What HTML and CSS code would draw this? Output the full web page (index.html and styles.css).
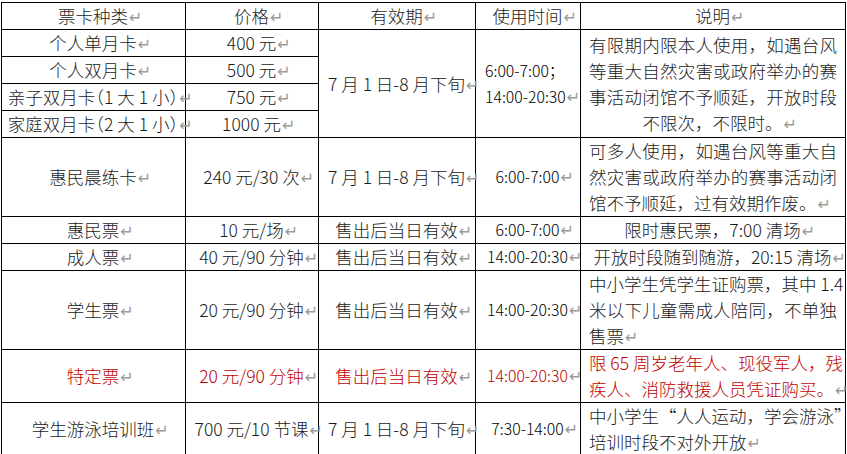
FILE: index.html
```html
<!DOCTYPE html>
<html lang="zh-CN">
<head>
<meta charset="utf-8">
<title>票卡种类</title>
<link rel="stylesheet" href="styles.css">
</head>
<body>
<table class="price-table">
  <thead>
    <tr class="r26">
      <th class="c1">票卡种类<span class="pm">↵</span></th>
      <th class="c2">价格<span class="pm">↵</span></th>
      <th class="c3">有效期<span class="pm">↵</span></th>
      <th class="c4">使用时间<span class="pm">↵</span></th>
      <th class="c5">说明<span class="pm">↵</span></th>
    </tr>
  </thead>
  <tbody>
    <tr class="r27">
      <td>个人单月卡<span class="pm">↵</span></td>
      <td>400 元<span class="pm">↵</span></td>
      <td rowspan="4">7 月 1 日-8 月下旬<span class="pm">↵</span></td>
      <td rowspan="4" class="time left">6:00-7:00；<br>14:00-20:30<span class="pm">↵</span></td>
      <td rowspan="4" class="desc">
        <span class="jl">有限期内限本人使用，如遇台风</span>
        <span class="jl">等重大自然灾害或政府举办的赛</span>
        <span class="jl">事活动闭馆不予顺延，开放时段</span>
        <span class="ll center">不限次，不限时。<span class="pm">↵</span></span>
      </td>
    </tr>
    <tr class="r27">
      <td>个人双月卡<span class="pm">↵</span></td>
      <td>500 元<span class="pm">↵</span></td>
    </tr>
    <tr class="r26">
      <td class="tight">亲子双月卡（1 大 1 小）<span class="pm">↵</span></td>
      <td>750 元<span class="pm">↵</span></td>
    </tr>
    <tr class="r27">
      <td class="tight">家庭双月卡（2 大 1 小）<span class="pm">↵</span></td>
      <td>1000 元<span class="pm">↵</span></td>
    </tr>
    <tr class="r79">
      <td>惠民晨练卡<span class="pm">↵</span></td>
      <td>240 元/30 次<span class="pm">↵</span></td>
      <td>7 月 1 日-8 月下旬<span class="pm">↵</span></td>
      <td class="time">6:00-7:00<span class="pm">↵</span></td>
      <td class="desc">
        <span class="jl">可多人使用，如遇台风等重大自</span>
        <span class="jl">然灾害或政府举办的赛事活动闭</span>
        <span class="ll">馆不予顺延，过有效期作废。<span class="pm">↵</span></span>
      </td>
    </tr>
    <tr class="r27">
      <td>惠民票<span class="pm">↵</span></td>
      <td>10 元/场<span class="pm">↵</span></td>
      <td>售出后当日有效<span class="pm">↵</span></td>
      <td class="time">6:00-7:00<span class="pm">↵</span></td>
      <td class="desc center">限时惠民票，7:00 清场<span class="pm">↵</span></td>
    </tr>
    <tr class="r27">
      <td>成人票<span class="pm">↵</span></td>
      <td>40 元/90 分钟<span class="pm">↵</span></td>
      <td>售出后当日有效<span class="pm">↵</span></td>
      <td class="time">14:00-20:30<span class="pm">↵</span></td>
      <td class="desc center">开放时段随到随游，20:15 清场<span class="pm">↵</span></td>
    </tr>
    <tr class="r79">
      <td>学生票<span class="pm">↵</span></td>
      <td>20 元/90 分钟<span class="pm">↵</span></td>
      <td>售出后当日有效<span class="pm">↵</span></td>
      <td class="time">14:00-20:30<span class="pm">↵</span></td>
      <td class="desc">
        <span class="jl">中小学生凭学生证购票，其中 1.4</span>
        <span class="jl">米以下儿童需成人陪同，不单独</span>
        <span class="ll">售票<span class="pm">↵</span></span>
      </td>
    </tr>
    <tr class="r53 red">
      <td>特定票<span class="pm">↵</span></td>
      <td>20 元/90 分钟<span class="pm">↵</span></td>
      <td>售出后当日有效<span class="pm">↵</span></td>
      <td class="time">14:00-20:30<span class="pm">↵</span></td>
      <td class="desc">
        <span class="jl">限 65 周岁老年人、现役军人，残</span>
        <span class="ll">疾人、消防救援人员凭证购买。<span class="pm">↵</span></span>
      </td>
    </tr>
    <tr class="r52">
      <td>学生游泳培训班<span class="pm">↵</span></td>
      <td>700 元/10 节课<span class="pm">↵</span></td>
      <td>7 月 1 日-8 月下旬<span class="pm">↵</span></td>
      <td class="time">7:30-14:00<span class="pm">↵</span></td>
      <td class="desc">
        <span class="jl">中小学生<span class="fw">“</span>人人运动，学会游泳<span class="fw">”</span></span>
        <span class="ll">培训时段不对外开放<span class="pm">↵</span></span>
      </td>
    </tr>
  </tbody>
</table>
</body>
</html>
```

FILE: styles.css
```css
html, body {
  background: #ffffff;
}
body {
  margin: 2px 0 0 1px;
  font-family: "Noto Sans CJK SC", "Noto Sans", sans-serif;
  font-size: 17.5px;
  font-weight: 300;
  color: #1a1a1a;
}
.price-table {
  border-collapse: separate;
  border-spacing: 0;
  table-layout: fixed;
  width: 845px;
  border-top: 1px solid #000;
  border-left: 1px solid #000;
}
.price-table th,
.price-table td {
  box-sizing: border-box;
  border-right: 1px solid #000;
  border-bottom: 1px solid #000;
  padding: 0 2px;
  font-weight: 300;
  text-align: center;
  vertical-align: middle;
  line-height: 26px;
  white-space: nowrap;
}
.price-table .c1 { width: 184px; }
.price-table .c2 { width: 133px; }
.price-table .c3 { width: 157px; }
.price-table .c4 { width: 105px; }
.price-table .c5 { width: 265px; }

.r26 > th, .r26 > td { height: 26px; }
.r27 > td { height: 27px; }
.r79 > td { height: 79px; }
.r53 > td { height: 53px; }
.r52 > td { height: 52px; }

.price-table td.time {
  font-size: 15.8px;
  color: #000;
}
.price-table td.left {
  text-align: left;
  padding-left: 9px;
}
.price-table td.tight {
  padding: 0;
  font-feature-settings: "halt";
}
.price-table td.desc {
  padding: 0 8px 0 8px;
  text-align: left;
}
.price-table td.desc.center {
  text-align: center;
  padding: 0 2px;
}
.jl {
  display: block;
  text-align: justify;
  text-align-last: justify;
}
.fw {
  display: inline-block;
  width: 1em;
  text-align: right;
}
.fw + .fw {
  text-align: left;
}
.ll {
  display: block;
  text-align: left;
}
.ll.center {
  text-align: center;
}
.red td,
.price-table .red td.time {
  color: #c00000;
}
.pm {
  display: inline-block;
  width: 0;
  padding-left: 1px;
  color: #9a9a9a;
  font-family: "DejaVu Sans", sans-serif;
  font-size: 16px;
  font-weight: 400;
  line-height: 1;
  letter-spacing: 0;
  vertical-align: 0;
}
```
